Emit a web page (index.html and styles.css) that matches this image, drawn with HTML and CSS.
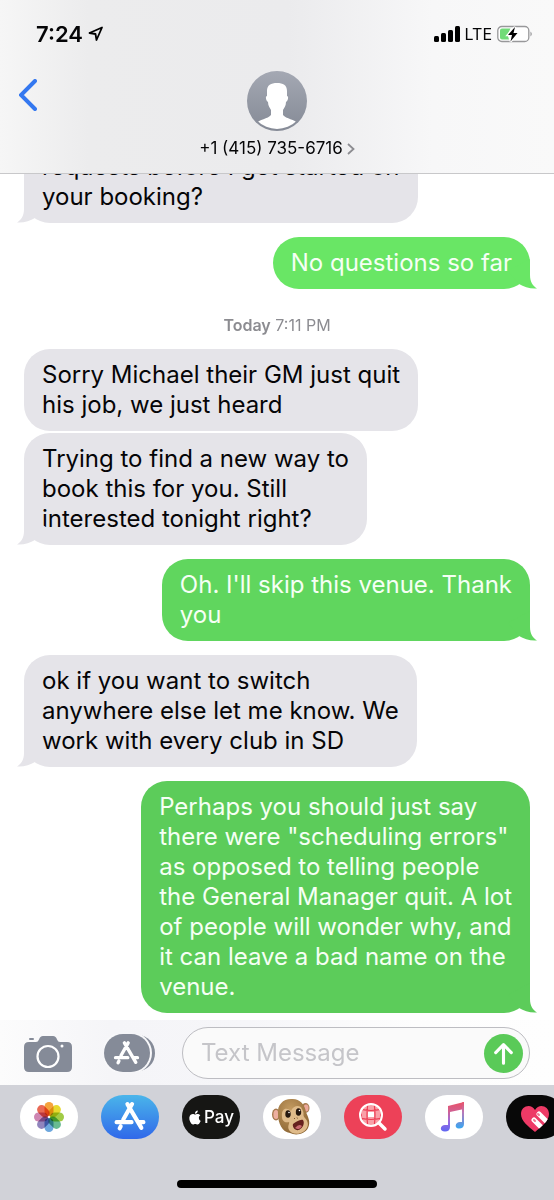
FILE: index.html
```html
<!DOCTYPE html>
<html lang="en">
<head>
<meta charset="utf-8">
<meta name="viewport" content="width=device-width, initial-scale=1">
<title>Messages</title>
<link rel="stylesheet" href="styles.css">
</head>
<body>
<svg class="defs" aria-hidden="true">
  <defs>
    <linearGradient id="avatar-fill" x1="0" y1="0" x2="0" y2="1"><stop offset="0" stop-color="#a4a8b3"/><stop offset="1" stop-color="#858a96"/></linearGradient>
    <linearGradient id="note-fill" x1="0" y1="0" x2="0" y2="1"><stop offset="0" stop-color="#ea5168"/><stop offset=".3" stop-color="#d2608f"/><stop offset=".65" stop-color="#9b6be0"/><stop offset="1" stop-color="#5f66f2"/></linearGradient>
    <linearGradient id="note-fill-right" x1="0" y1="0" x2="0" y2="1"><stop offset="0" stop-color="#ea5168"/><stop offset=".4" stop-color="#b779bb"/><stop offset="1" stop-color="#35a6f2"/></linearGradient>
    <radialGradient id="fur" cx=".4" cy=".3" r=".8"><stop offset="0" stop-color="#c49b61"/><stop offset="1" stop-color="#86602f"/></radialGradient>
    <clipPath id="avatar-clip"><circle cx="30" cy="30" r="28"/></clipPath>
    <clipPath id="globe-clip"><circle cx="12" cy="12" r="10"/></clipPath>
    <clipPath id="heart-clip"><path d="M15 27C8 21 1 16 1 9C1 1 11-2 15 5C19-2 29 1 29 9C29 16 22 21 15 27Z"/></clipPath>
  </defs>
  <symbol id="tail" viewBox="0 0 32 30"><path d="M8 0V16C8 23 5 27 1 29.500C8 30 14 28 19 25L30 12Z"/></symbol>
  <symbol id="store" viewBox="0 0 32 30"><g fill="none" stroke="currentColor" stroke-width="4" stroke-linecap="round"><path d="M18 3L9.500 18M13.500 3L27 26M3 20.500H17.500M24.500 20.500H29M7 24.500L6 26.500"/></g></symbol>
</svg>

<header class="header">
  <div class="status">
    <div class="clock">7:24
      <svg class="location" viewBox="0 0 16 16" aria-hidden="true"><path d="M1.500 7L14 1.500L8.500 14L7.500 8Z" fill="none" stroke="#000" stroke-width="1.800" stroke-linejoin="round"/></svg>
    </div>
    <div class="signals">
      <svg class="bars" viewBox="0 0 26 16" aria-hidden="true"><rect y="10" width="5" height="6" rx="1.500"/><rect x="7" y="7" width="5" height="9" rx="1.500"/><rect x="14" y="4" width="5" height="12" rx="1.500"/><rect x="21" width="5" height="16" rx="1.500"/></svg>
      <span>LTE</span>
      <svg class="battery" viewBox="0 0 36 18" aria-hidden="true"><rect x=".8" y="1.500" width="31" height="15" rx="4" fill="#fff" stroke="#98989a" stroke-width="1.300"/><path d="M5 3.500H13.500L10.500 9.500L12 14.500H5Q3 14.500 3 12.500V5.500Q3 3.500 5 3.500Z" fill="#71db78"/><path d="M33.500 6.500Q36 9 33.500 11.500Z" fill="#8d8d90"/><path d="M18 2L11 10H15L13.500 16.500L20.500 8H16.500Z" stroke="#fff" stroke-width="2.500" paint-order="stroke"/></svg>
    </div>
  </div>
  <div class="contact-bar">
    <button class="back" aria-label="Back"><svg viewBox="0 0 18 32" aria-hidden="true"><path d="M16 2L2 16L16 30" fill="none" stroke="#3478f0" stroke-width="4" stroke-linecap="round" stroke-linejoin="miter"/></svg></button>
    <button class="contact">
      <svg class="avatar" viewBox="0 0 60 60" aria-hidden="true"><circle cx="30" cy="30" r="30" fill="url(#avatar-fill)"/><path clip-path="url(#avatar-clip)" fill="#fff" d="M30 12C36 12 40 14 40 20V25C42 25 41 30 39 31C39 35 37 37 36 39V44C39 48 48 48 51 53V60H9V53C12 48 21 48 24 44V39C23 37 21 35 21 31C19 30 18 25 20 25V20C20 14 24 12 30 12Z"/></svg>
      <span class="number">+1 (415) 735-6716 <svg viewBox="0 0 8 12" aria-hidden="true"><path d="M1 1L6.500 6L1 11" fill="none" stroke="#8c8c91" stroke-width="1.800"/></svg></span>
    </button>
  </div>
</header>

<main class="thread">
  <p class="bubble received">requests before I get started on<br>your booking?<svg class="tail" aria-hidden="true"><use href="#tail"/></svg></p>
  <p class="bubble sent light">No questions so far<svg class="tail" aria-hidden="true"><use href="#tail"/></svg></p>
  <p class="stamp"><b>Today</b> 7:11 PM</p>
  <p class="bubble received joined">Sorry Michael their GM just quit<br>his job, we just heard</p>
  <p class="bubble received">Trying to find a new way to<br>book this for you. Still<br>interested tonight right?<svg class="tail" aria-hidden="true"><use href="#tail"/></svg></p>
  <p class="bubble sent medium">Oh. I'll skip this venue. Thank<br>you<svg class="tail" aria-hidden="true"><use href="#tail"/></svg></p>
  <p class="bubble received">ok if you want to switch<br>anywhere else let me know. We<br>work with every club in SD<svg class="tail" aria-hidden="true"><use href="#tail"/></svg></p>
  <p class="bubble sent">Perhaps you should just say<br>there were "scheduling errors"<br>as opposed to telling people<br>the General Manager quit. A lot<br>of people will wonder why, and<br>it can leave a bad name on the<br>venue.<svg class="tail" aria-hidden="true"><use href="#tail"/></svg></p>
</main>

<form class="composer">
  <button type="button" class="tool" aria-label="Camera"><svg class="camera" viewBox="0 0 48 37" aria-hidden="true"><rect x="5" y="3" width="5" height="2" rx="1" fill="#858b98"/><path fill="#858b98" d="M5 7H12Q14 7 15 4.500Q16 1 19 1H29Q32 1 33 4.500Q34 7 36 7H43Q48 7 48 12V32Q48 37 43 37H5Q0 37 0 32V12Q0 7 5 7Z"/><circle cx="24" cy="21.500" r="10.500" fill="none" stroke="#fff" stroke-width="2.200"/><circle cx="38" cy="11" r="1.500" fill="#fff"/></svg></button>
  <button type="button" class="tool" aria-label="Apps"><svg class="apps" viewBox="0 0 52 38" aria-hidden="true"><path fill="#858b98" d="M33 0C44 2 51 9 51 19S44 36 33 38Z"/><rect x="-2" y="-2" width="50" height="42" rx="21" fill="#f8f8fa"/><rect width="46" height="38" rx="19" fill="#858b98"/><svg x="9" y="6" width="27" height="26" color="#fff"><use href="#store"/></svg></svg></button>
  <div class="field">
    <input type="text" placeholder="Text Message" aria-label="Text Message">
    <button class="send" type="button" aria-label="Send"><svg viewBox="0 0 40 40" aria-hidden="true"><path d="M20 30V11M12 19L20 11L28 19" fill="none" stroke="#fff" stroke-width="3.200" stroke-linecap="round" stroke-linejoin="round"/></svg></button>
  </div>
</form>

<footer class="tray">
  <nav class="apps-row" aria-label="Message apps">
    <button class="app white" aria-label="Photos"><svg viewBox="0 0 58 44" aria-hidden="true"><g class="petals"><rect x="24.500" y="7" width="9" height="14" rx="4.500" fill="#f5a33c"/><rect x="24.500" y="7" width="9" height="14" rx="4.500" fill="#e7d92f" transform="rotate(45 29 22)"/><rect x="24.500" y="7" width="9" height="14" rx="4.500" fill="#a1cb45" transform="rotate(90 29 22)"/><rect x="24.500" y="7" width="9" height="14" rx="4.500" fill="#68bb91" transform="rotate(135 29 22)"/><rect x="24.500" y="7" width="9" height="14" rx="4.500" fill="#6da7dd" transform="rotate(180 29 22)"/><rect x="24.500" y="7" width="9" height="14" rx="4.500" fill="#9185bd" transform="rotate(225 29 22)"/><rect x="24.500" y="7" width="9" height="14" rx="4.500" fill="#ce86b2" transform="rotate(270 29 22)"/><rect x="24.500" y="7" width="9" height="14" rx="4.500" fill="#e96955" transform="rotate(315 29 22)"/></g></svg></button>
    <button class="app blue" aria-label="App Store"><svg viewBox="0 0 58 44" aria-hidden="true"><svg x="12" y="6" width="34" height="31" color="#fff"><use href="#store"/></svg></svg></button>
    <button class="app black pay" aria-label="Apple Pay"><svg viewBox="0 0 24 24" aria-hidden="true"><path fill="#fff" d="M12.152 6.896c-.948 0-2.415-1.078-3.960-1.040-2.040.027-3.910 1.183-4.961 3.014-2.117 3.675-.546 9.103 1.519 12.090 1.013 1.454 2.208 3.090 3.792 3.039 1.520-.065 2.090-.987 3.935-.987 1.831 0 2.350.987 3.960.948 1.637-.026 2.676-1.480 3.676-2.948 1.156-1.688 1.636-3.325 1.662-3.415-.039-.013-3.182-1.221-3.220-4.857-.026-3.040 2.480-4.494 2.597-4.559-1.429-2.090-3.623-2.324-4.390-2.376-2-.156-3.675 1.090-4.610 1.090zM15.530 3.830c.843-1.012 1.400-2.427 1.245-3.830-1.207.052-2.662.805-3.532 1.818-.780.896-1.454 2.338-1.273 3.714 1.338.104 2.715-.688 3.559-1.701"/></svg><span>Pay</span></button>
    <button class="app white" aria-label="Animoji"><svg viewBox="0 0 58 44" aria-hidden="true"><ellipse cx="13" cy="19.500" rx="4" ry="6" fill="#a77b50"/><ellipse cx="13" cy="19.500" rx="2.600" ry="4.500" fill="#edafa0"/><ellipse cx="42.500" cy="13" rx="4" ry="5" fill="#a77b50"/><ellipse cx="43" cy="13" rx="2.500" ry="3.500" fill="#eba89b"/><path d="M15 19C14 10 20 4 28 4C36 3 42 9 43 17C45 22 48 27 45 33C42 39 33 41 27 38C19 37 15 28 15 19Z" fill="url(#fur)"/><path d="M19 22C18 13 24 12 28 16C30 11 37 9 39 14C42 19 39 20 42 23C47 28 45 34 40 37C35 40 28 39 26 35C24 31 27 28 26 27C22 28 19 26 19 22Z" fill="#dfbb8a"/><ellipse cx="25" cy="19" rx="2.700" ry="3.800" fill="#24170f"/><ellipse cx="35.500" cy="17" rx="2.700" ry="3.800" fill="#24170f"/><circle cx="26" cy="17.500" r=".8" fill="#fff"/><circle cx="36.500" cy="15.500" r=".8" fill="#fff"/><path d="M30 29C33 27 37 24 40 25C42 28 40 33 36 35C32 36 29 32 30 29Z" fill="#65201d"/><path d="M32 33Q36 28 39 31Q37 36 32 33Z" fill="#c9686f"/><path d="M31 23L32 24M34 22.500L34.500 23.500" stroke="#795330" stroke-width="1"/></svg></button>
    <button class="app red" aria-label="Images"><svg viewBox="0 0 58 44" aria-hidden="true"><g transform="translate(15 8)"><circle cx="12" cy="12" r="11" fill="#f9a0a8"/><g clip-path="url(#globe-clip)" fill="none" stroke="#ed3d54" stroke-width="1.200"><path d="M0 6Q12 9 24 6M0 15Q12 18 24 15M9 0Q7 12 9 24M15 0Q17 12 15 24M3 4Q1 12 4 20M21 4Q23 12 20 20"/></g><rect x="9" y="9" width="6" height="5" fill="#fff"/><circle cx="12" cy="12" r="11" fill="none" stroke="#fff" stroke-width="2"/><path d="M20 20L26 26" stroke="#fff" stroke-width="3.500" stroke-linecap="round"/></g></svg></button>
    <button class="app white" aria-label="Music"><svg viewBox="0 0 58 44" aria-hidden="true"><path d="M23 11L39 7V14L25 17V32C25 35 23 36.500 20 36.500C14 36.500 15 30 20 30H23Z" fill="url(#note-fill)"/><path d="M37 7.500L39 7V29C39 32 37 33.500 34 33.500C29 33.500 30 27 35 27H37Z" fill="url(#note-fill-right)"/></svg></button>
    <button class="app black" aria-label="Digital Touch"><svg viewBox="0 0 58 44" aria-hidden="true"><g transform="translate(14 10)" clip-path="url(#heart-clip)"><rect width="30" height="28" fill="#ed3a66"/><g stroke-linecap="round"><path d="M19 9L31 21M14 15L29 30" stroke="#fff" stroke-width="5"/><path d="M18 9L19 10M14 15L15 16" stroke="#ee7a92" stroke-width="2"/></g></g></svg></button>
  </nav>
  <div class="home"></div>
</footer>
</body>
</html>
```
FILE: styles.css
```css
* {
  box-sizing: border-box;
}

body {
  display: flex;
  flex-direction: column;
  height: 100vh;
  margin: 0;
  overflow: hidden;
  background: #fff;
  color: #050507;
  font-family: Inter, "Liberation Sans", sans-serif;
}

button {
  padding: 0;
  border: 0;
  background: none;
  color: inherit;
  font: inherit;
}

svg {
  display: block;
  flex: none;
}

.defs {
  position: absolute;
  width: 0;
  height: 0;
}

.header {
  flex: none;
  padding-bottom: 14px;
  border-bottom: 1px solid #c8c8ca;
  background: linear-gradient(90deg, #f6f6f6, #ececed 16%, #ebebed 52%, #f7f7f8 78%, #f9f9f9);
}

.status {
  display: flex;
  justify-content: space-between;
  align-items: center;
  padding: 20px 21px 23px 36px;
  line-height: 28px;
}

.clock,
.signals {
  display: flex;
  align-items: center;
  gap: 5px;
}

.clock {
  font-size: 22px;
  font-weight: 600;
}

.signals {
  font-size: 16px;
}

.location {
  width: 16px;
  height: 16px;
}

.bars {
  width: 26px;
  height: 16px;
}

.battery {
  width: 36px;
  height: 18px;
}

.contact-bar {
  display: grid;
  grid-template-columns: 1fr auto 1fr;
  align-items: start;
}

.back {
  justify-self: start;
  padding: 8px 19px;
}

.back svg {
  width: 18px;
  height: 32px;
}

.contact {
  display: flex;
  flex-direction: column;
  align-items: center;
  gap: 7px;
}

.avatar {
  width: 60px;
  height: 60px;
}

.number {
  display: flex;
  align-items: center;
  gap: 4px;
  font-size: 17px;
  line-height: 21px;
}

.number svg {
  width: 8px;
  height: 12px;
}

.thread {
  display: flex;
  flex: 1;
  flex-direction: column;
  justify-content: flex-end;
  min-height: 0;
  padding: 0 24px 7px;
  overflow: hidden;
}

.bubble {
  position: relative;
  flex: none;
  max-width: 80%;
  margin: 14px 0 0;
  padding: 11px 18px;
  border-radius: 26px;
  font-size: 24px;
  line-height: 30px;
}

.received {
  align-self: flex-start;
  background: #e5e4e9;
  fill: #e5e4e9;
}

.stamp + .bubble {
  margin-top: 0;
}

.joined + .bubble {
  margin-top: 2px;
}

.sent {
  align-self: flex-end;
  background: #5ccc5a;
  color: #f5fff4;
  fill: #5ccc5a;
}

.medium {
  background: #60d65e;
  fill: #60d65e;
}

.light {
  background: #69e665;
  fill: #69e665;
}

.tail {
  position: absolute;
  bottom: 0;
  left: -8px;
  width: 32px;
  height: 30px;
}

.sent .tail {
  right: -8px;
  left: auto;
  transform: scaleX(-1);
}

.stamp {
  flex: none;
  margin: 26px 0 14px;
  color: #8c8c91;
  font-size: 16px;
  line-height: 20px;
  text-align: center;
}

.stamp b {
  font-weight: 600;
}

.composer {
  display: flex;
  flex: none;
  align-items: center;
  padding: 7px 24px 6px;
  background: linear-gradient(90deg, #fcfcfc, #f5f5f8 20%, #f6f6f9 45%, #fdfdfd 75%, #fefefe);
}

.camera {
  width: 48px;
  height: 37px;
}

.apps {
  width: 52px;
  height: 38px;
}

.tool + .tool {
  margin-left: 32px;
}

.field {
  display: flex;
  flex: 1;
  align-items: center;
  min-width: 0;
  height: 52px;
  margin-left: 26px;
  padding: 0 6px 0 18px;
  border: 1px solid #bdbdc2;
  border-radius: 26px;
  background: #fafafa;
}

.field input {
  flex: 1;
  min-width: 0;
  padding: 0;
  border: 0;
  outline: 0;
  background: transparent;
  font: 24px/30px Inter, "Liberation Sans", sans-serif;
}

.field input::placeholder {
  color: #c5c5c9;
  opacity: 1;
}

.send {
  width: 39px;
  height: 39px;
  border-radius: 50%;
  background: #5aca58;
}

.tray {
  flex: none;
  padding: 10px 0 12px;
  overflow: hidden;
  background: #d1d2d8;
}

.apps-row {
  display: flex;
  gap: 23px;
  padding-left: 20px;
}

.app {
  flex: none;
  width: 58px;
  height: 44px;
  overflow: hidden;
  border-radius: 22px;
}

.white {
  background: #fff;
}

.blue {
  background: linear-gradient(#4ab5ea, #3068ea);
}

.black {
  background: #080808;
}

.red {
  background: #ed4158;
}

.petals rect {
  mix-blend-mode: multiply;
}

.pay {
  display: flex;
  justify-content: center;
  align-items: center;
  gap: 2px;
  background: #161614;
  color: #fff;
  font-size: 17px;
  font-weight: 500;
}

.pay svg {
  width: 14px;
  height: 15px;
}

.home {
  width: 36%;
  height: 8px;
  margin: 41px auto 0;
  border-radius: 4px;
  background: #000;
}
```
